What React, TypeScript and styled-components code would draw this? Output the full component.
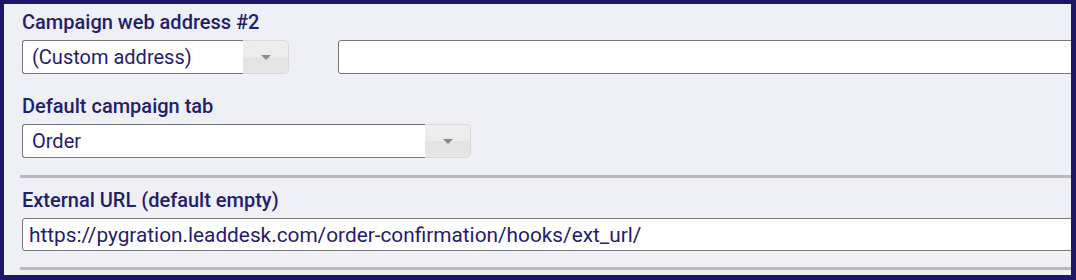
import React from "react";
import styled, { createGlobalStyle } from "styled-components";

const Global = createGlobalStyle`
  html, body { margin: 0; padding: 0; background: #ffffff; }
  * { box-sizing: border-box; }
`;

const Frame = styled.div`
  width: 1076px;
  height: 280px;
  overflow: hidden;
  background: #eff0f5;
  border-style: solid;
  border-color: #1e1566;
  border-width: 4px 5px 5px 4px;
  padding: 7px 0 0 16px;
  font-family: Roboto, "Liberation Sans", sans-serif;
  color: #241c6c;
`;

const Group = styled.section<{ $top?: number; $bottom?: number }>`
  display: flex;
  flex-direction: column;
  gap: 6px;
  padding: ${(p) => p.$top ?? 0}px 2px 0 2px;
  margin-bottom: ${(p) => p.$bottom ?? 0}px;
`;

const Label = styled.div`
  font-size: 20px;
  font-weight: 500;
  line-height: 23px;
  white-space: nowrap;
`;

const Row = styled.div<{ $gap?: number }>`
  display: flex;
  align-items: center;
  gap: ${(p) => p.$gap ?? 0}px;
`;

const SelectBox = styled.div<{ $width: number }>`
  display: flex;
  flex: none;
  width: ${(p) => p.$width}px;
  height: 34px;
`;

const SelectValue = styled.div`
  flex: 1;
  display: flex;
  align-items: center;
  padding-left: 9px;
  background: #ffffff;
  border: 1px solid #777777;
  border-right: none;
  border-radius: 3px 0 0 3px;
  font-size: 20px;
  line-height: 23px;
  white-space: nowrap;
`;

const SelectButton = styled.div`
  width: 46px;
  flex: none;
  display: flex;
  align-items: center;
  justify-content: center;
  border: 1px solid #d9d9d9;
  border-left: none;
  border-radius: 0 5px 5px 0;
  background: linear-gradient(#efefef 0%, #ebebeb 50%, #e3e3e3 51%, #e6e6e6 100%);
`;

const Arrow = styled.span`
  width: 0;
  height: 0;
  border-left: 5px solid transparent;
  border-right: 5px solid transparent;
  border-top: 5px solid #8a8a8a;
  margin-top: 1px;
`;

const TextInput = styled.div<{ $width: number; $h: number }>`
  flex: none;
  width: ${(p) => p.$width}px;
  height: ${(p) => p.$h}px;
  display: flex;
  align-items: center;
  padding-left: 6px;
  background: #ffffff;
  border: 1px solid #777777;
  border-radius: 3px;
  font-size: 20.8px;
  line-height: 24px;
  white-space: nowrap;
  color: #241c6c;
`;

const Separator = styled.hr<{ $top: number }>`
  margin: ${(p) => p.$top}px 0 0 0;
  width: 1200px;
  height: 3px;
  border: none;
  background: #b9b9bb;
`;

const Select = ({ value, width }: { value: string; width: number }) => (
  <SelectBox $width={width}>
    <SelectValue>{value}</SelectValue>
    <SelectButton>
      <Arrow />
    </SelectButton>
  </SelectBox>
);

export default function App() {
  return (
    <>
      <Global />
      <Frame>
        <Group $bottom={21}>
          <Label>Campaign web address #2</Label>
          <Row $gap={49}>
            <Select value="(Custom address)" width={267} />
            <TextInput $width={900} $h={34} />
          </Row>
        </Group>
        <Group>
          <Label>Default campaign tab</Label>
          <Select value="Order" width={449} />
        </Group>
        <Separator $top={17} />
        <Group $top={11}>
          <Label>External URL (default empty)</Label>
          <TextInput $width={1100} $h={33}>
            https://pygration.leaddesk.com/order-confirmation/hooks/ext_url/
          </TextInput>
        </Group>
        <Separator $top={16} />
      </Frame>
    </>
  );
}
